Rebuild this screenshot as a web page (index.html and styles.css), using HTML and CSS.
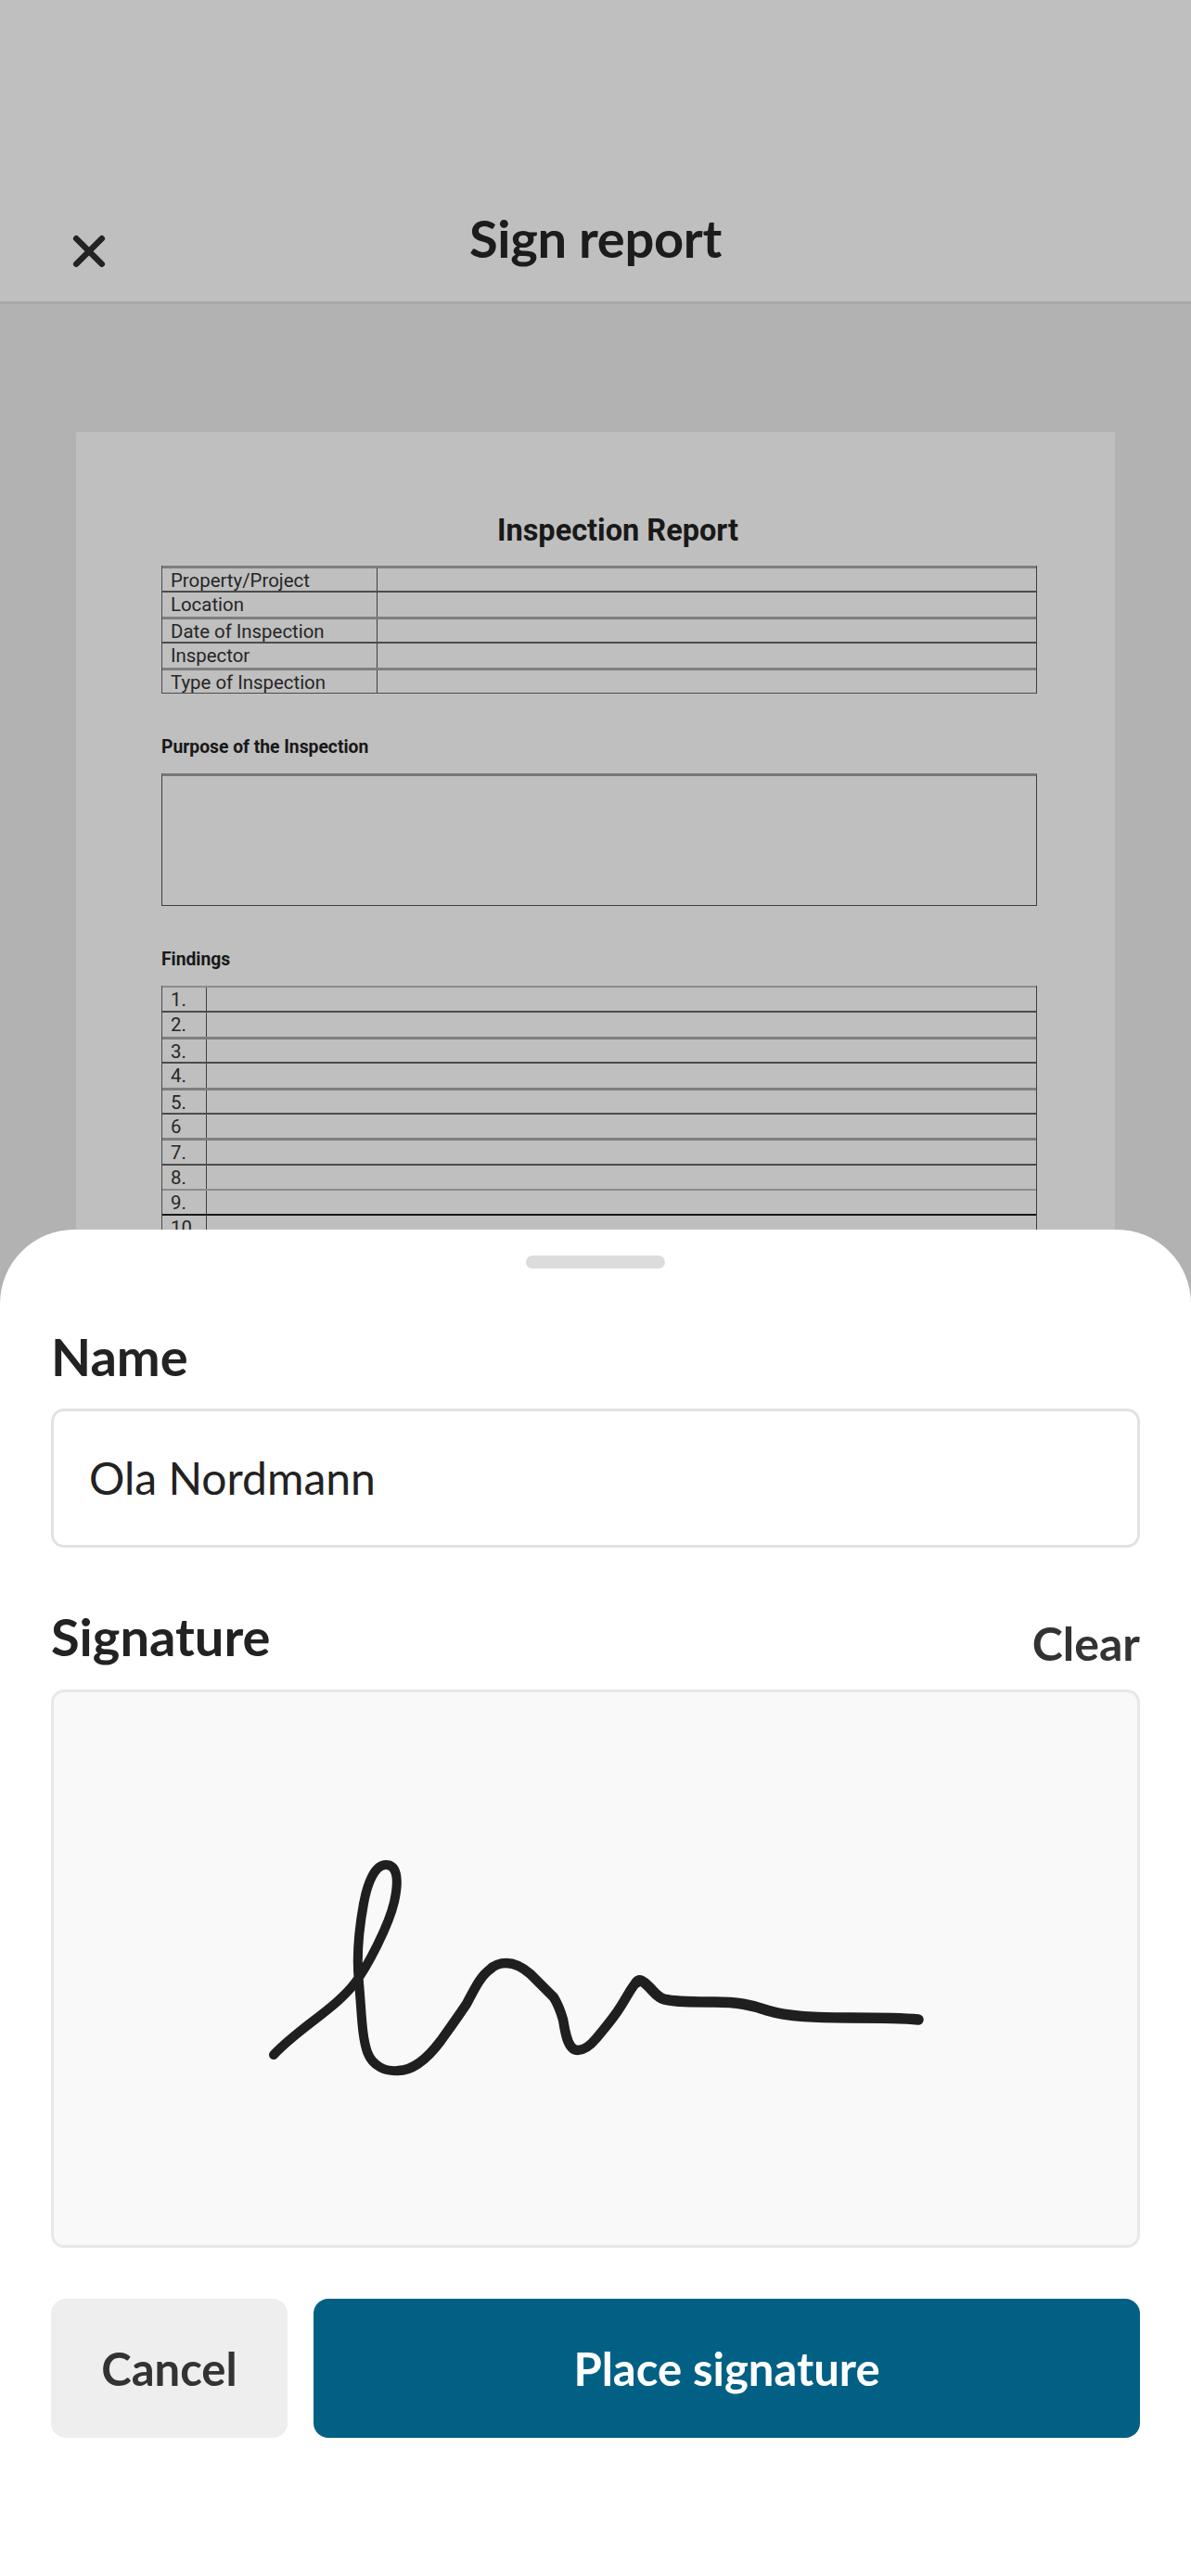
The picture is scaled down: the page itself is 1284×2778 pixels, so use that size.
FILE: index.html
```html
<!DOCTYPE html>
<html lang="en">
  <head>
    <meta charset="UTF-8" />
    <meta name="viewport" content="width=device-width, initial-scale=1.0" />
    <title>Sign report</title>
    <link rel="stylesheet" href="styles.css">
  </head>
  <body>
    <div class="screen">
      <header class="topbar">
        <button class="close-btn" aria-label="Close">
          <svg width="36" height="36" viewBox="0 0 36 36">
            <path d="M4.2 4.2 L31.8 31.8 M31.8 4.2 L4.2 31.8" />
          </svg>
        </button>
        <h1>Sign report</h1>
      </header>

      <main class="viewer">
        <div class="report">
          <h2>Inspection Report</h2>
          <div class="form-table">
            <div class="row soft"><span class="cell-label">Property/Project</span></div>
            <div class="row"><span class="cell-label">Location</span></div>
            <div class="row soft"><span class="cell-label">Date of Inspection</span></div>
            <div class="row"><span class="cell-label">Inspector</span></div>
            <div class="row soft"><span class="cell-label">Type of Inspection</span></div>
          </div>

          <h3>Purpose of the Inspection</h3>
          <div class="empty-box"></div>

          <h3>Findings</h3>
          <div class="form-table findings">
            <div class="row faint"><span class="cell-label">1.</span></div>
            <div class="row"><span class="cell-label">2.</span></div>
            <div class="row soft"><span class="cell-label">3.</span></div>
            <div class="row"><span class="cell-label">4.</span></div>
            <div class="row soft"><span class="cell-label">5.</span></div>
            <div class="row"><span class="cell-label">6</span></div>
            <div class="row soft"><span class="cell-label">7.</span></div>
            <div class="row"><span class="cell-label">8.</span></div>
            <div class="row faint"><span class="cell-label">9.</span></div>
            <div class="row strong"><span class="cell-label">10.</span></div>
          </div>
        </div>
      </main>

      <div class="scrim"></div>

      <section class="sheet">
        <div class="handle"></div>

        <label class="field-label name-label">Name</label>
        <div class="text-input">Ola Nordmann</div>

        <div class="signature-head">
          <label class="field-label">Signature</label>
          <span class="clear">Clear</span>
        </div>
        <div class="signature-pad">
          <svg width="808" height="328" viewBox="238 1958 808 328">
            <path class="stroke-thin" d="M295 2215 C322 2186 362 2165 383 2137 C396 2120 419 2076 425 2050 C431 2023 427 2010 416 2010 C404 2010 396 2030 392 2052 C386 2085 384 2110 387 2137 C390 2170 390 2195 396 2212 C402 2228 416 2233 429 2232" />
            <path class="stroke-mid" d="M429 2232 C445 2232 460 2220 475 2200 C485 2186 493 2175 503 2160 C511 2145 518 2130 528 2123 C534 2117 540 2116 546 2116 C556 2116 564 2121 572 2128 C582 2138 590 2146 597 2153 C603 2163 605 2170 607 2177 C609 2187 611 2210 623 2210 C631 2210 638 2203 643 2197 C652 2186 661 2176 669 2163 C676 2152 682 2140 686 2137" />
            <path class="stroke-wide" d="M686 2137 C689 2132 694 2136 700 2142 C706 2148 709 2153 716 2155 C728 2158 745 2158 770 2158 C795 2158 810 2161 827 2167 C850 2174 880 2175 915 2175 C950 2175 970 2175 990 2177" />
          </svg>
        </div>

        <div class="actions">
          <button class="btn btn-cancel">Cancel</button>
          <button class="btn btn-primary">Place signature</button>
        </div>
      </section>
    </div>
  </body>
</html>
```

FILE: styles.css
```css
* {
  box-sizing: border-box;
}
body {
  font-family: Lato, "Open Sans", sans-serif;
  margin: 0;
  padding: 0;
}
.screen {
  position: relative;
  width: 1284px;
  height: 2778px;
  overflow: hidden;
  background-color: #eeeeee;
}

/* top bar */
.topbar {
  display: flex;
  justify-content: center;
  position: relative;
  height: 328px;
  padding-top: 224px;
  background-color: #fff;
  border-bottom: 3px solid #e0e0e0;
}
.topbar h1 {
  margin: 0;
  font-size: 56px;
  line-height: 66px;
  letter-spacing: -0.3px;
  font-weight: 700;
  color: #262626;
}
.close-btn {
  position: absolute;
  left: 78px;
  top: 253px;
  width: 36px;
  height: 36px;
  padding: 0;
  border: none;
  background: none;
}
.close-btn path {
  fill: none;
  stroke: #2f2f2f;
  stroke-width: 6.5;
  stroke-linecap: round;
}

/* the document behind the sheet */
.viewer {
  padding: 138px 82px 0;
}
.report {
  height: 1400px;
  padding: 86px 84px 0 92px;
  background-color: #fff;
  font-family: Roboto, Arial, sans-serif;
  color: #222;
}
.report h2 {
  margin: 0 0 18px;
  padding-left: 40px;
  text-align: center;
  font-size: 32.5px;
  line-height: 40px;
  font-weight: 700;
}
.report h3 {
  margin: 46px 0 16px;
  font-size: 19.3px;
  line-height: 24px;
  font-weight: 700;
}
.form-table {
  border-left: 1px solid #666;
  border-right: 1px solid #555;
  border-bottom: 1px solid #666;
}
.row {
  height: 27.4px;
  border-top: 2px solid #666;
}
.row.soft {
  border-top-color: #a8a8a8;
  border-top-width: 3px;
}
.row.faint {
  border-top-color: #bbb;
  border-top-width: 2px;
}
.row.strong {
  border-top-color: #222;
}
.cell-label {
  display: block;
  width: 232px;
  height: 100%;
  padding-left: 9px;
  border-right: 1px solid #555;
  font-size: 20.4px;
  line-height: 26px;
  color: #333;
}
.findings .cell-label {
  width: 48px;
}
.empty-box {
  height: 143px;
  border: 1px solid #555;
  border-top: 3px solid #a0a0a0;
}

.scrim {
  position: absolute;
  inset: 0;
  background-color: rgba(0, 0, 0, 0.25);
}

/* bottom sheet */
.sheet {
  position: absolute;
  left: 0;
  right: 0;
  top: 1326px;
  bottom: 0;
  padding: 28px 55px 0;
  background-color: #fff;
  border-radius: 80px 80px 0 0;
}
.handle {
  width: 150px;
  height: 14px;
  margin: 0 auto 61px;
  border-radius: 7px;
  background-color: #dcdcdc;
}
.field-label {
  display: block;
  font-size: 56px;
  line-height: 68px;
  font-weight: 700;
  color: #222;
}
.name-label {
  margin-bottom: 22px;
}
.text-input {
  height: 150px;
  padding-left: 38px;
  border: 3px solid #e2e2e2;
  border-radius: 14px;
  font-size: 48px;
  line-height: 144px;
  color: #222;
}
.signature-head {
  display: flex;
  justify-content: space-between;
  align-items: flex-end;
  margin: 62px 0 21px;
}
.signature-head .field-label {
  margin-bottom: 2px;
}
.clear {
  font-size: 50px;
  line-height: 58px;
  font-weight: 700;
  color: #333;
}
.signature-pad {
  display: flex;
  justify-content: center;
  align-items: center;
  height: 602px;
  background-color: #f9f9f9;
  border: 3px solid #e8e8e8;
  border-radius: 14px;
}
.signature-pad path {
  fill: none;
  stroke: #1f1f1f;
  stroke-linecap: round;
  stroke-linejoin: round;
}
.stroke-thin {
  stroke-width: 10;
}
.stroke-mid {
  stroke-width: 10.5;
}
.stroke-wide {
  stroke-width: 11.5;
}
.actions {
  display: flex;
  gap: 28px;
  margin-top: 55px;
}
.btn {
  height: 150px;
  border: none;
  border-radius: 16px;
  font-family: Lato, "Open Sans", sans-serif;
  font-size: 49px;
  font-weight: 700;
}
.btn-cancel {
  width: 255px;
  background-color: #eeeeee;
  color: #333;
}
.btn-primary {
  flex: 1;
  background-color: #036085;
  color: #fff;
}
```
